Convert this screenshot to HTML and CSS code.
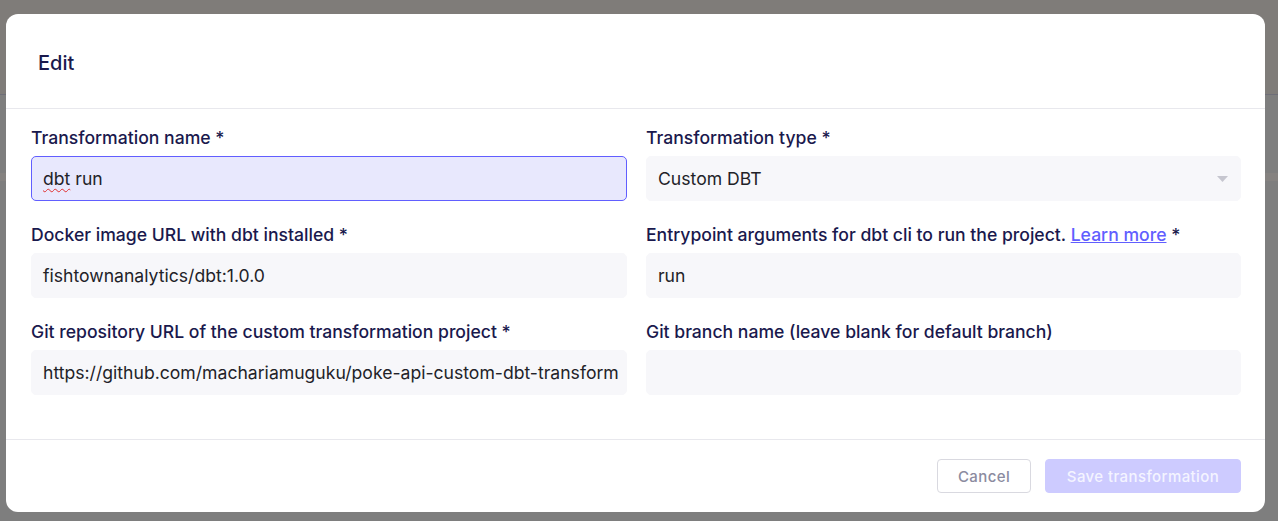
FILE: index.html
```html
<!DOCTYPE html>
<html lang="en">
<head>
<meta charset="utf-8">
<title>Edit</title>
<link rel="stylesheet" href="styles.css">
</head>
<body>
<div class="backdrop">
  <div class="page-bg">
    <div class="bg-top"></div>
    <div class="bg-band"></div>
  </div>
  <div class="modal">
    <div class="modal-header">Edit</div>
    <div class="modal-body">
      <div class="field">
        <label class="label">Transformation name *</label>
        <div class="input focused"><span class="misspelled">dbt</span>&nbsp;run</div>
      </div>
      <div class="field">
        <label class="label">Transformation type *</label>
        <div class="input select">
          <span>Custom DBT</span>
          <svg class="caret" width="11" height="6" viewBox="0 0 11 6"><path d="M0 0 H11 L5.5 6 Z" fill="#c6c6cf"/></svg>
        </div>
      </div>
      <div class="field">
        <label class="label">Docker image URL with dbt installed *</label>
        <div class="input">fishtownanalytics/dbt:1.0.0</div>
      </div>
      <div class="field">
        <label class="label">Entrypoint arguments for dbt cli to run the project. <a class="link" href="#">Learn more</a> *</label>
        <div class="input">run</div>
      </div>
      <div class="field">
        <label class="label">Git repository URL of the custom transformation project *</label>
        <div class="input">https://github.com/machariamuguku/poke-api-custom-dbt-transform</div>
      </div>
      <div class="field">
        <label class="label">Git branch name (leave blank for default branch)</label>
        <div class="input"></div>
      </div>
    </div>
    <div class="modal-footer">
      <button class="btn btn-secondary">Cancel</button>
      <button class="btn btn-primary" disabled>Save transformation</button>
    </div>
  </div>
</div>
</body>
</html>
```
FILE: styles.css
```css
* { box-sizing: border-box; }
html, body { margin: 0; padding: 0; }
body {
  font-family: Inter, "Noto Sans", sans-serif;
  background: #7e7e7e;
  width: 1278px;
  height: 521px;
  overflow: hidden;
}
.backdrop {
  position: relative;
  width: 1278px;
  height: 521px;
  padding: 14px 13px 0 6px;
}
.page-bg {
  position: absolute;
  inset: 0;
  z-index: 0;
}
.bg-top {
  height: 95px;
  background: #7f7c79;
  border-bottom: 1px solid #6e6e78;
}
.bg-band {
  margin-top: 78px;
  height: 8px;
  background: #858280;
}
.modal {
  position: relative;
  z-index: 1;
  width: 1259px;
  height: 498px;
  background: #ffffff;
  border-radius: 12px;
  display: flex;
  flex-direction: column;
}
.modal-header {
  height: 95px;
  padding: 4px 0 0 32px;
  display: flex;
  align-items: center;
  font-size: 20px;
  font-weight: 500;
  color: #1a194d;
  border-bottom: 1px solid #e8e8ed;
}
.modal-body {
  padding: 18px 24px 0 25px;
  display: grid;
  grid-template-columns: 596px 595px;
  column-gap: 19px;
  row-gap: 23px;
  height: 331px;
  border-bottom: 1px solid #e8e8ed;
  align-content: start;
}
.field {
  display: flex;
  flex-direction: column;
}
.label {
  font-size: 17.6px;
  font-weight: 500;
  line-height: 22px;
  color: #1a194d;
  margin-bottom: 7px;
  white-space: nowrap;
}
.link {
  color: #615eff;
  text-decoration: underline;
}
.input {
  height: 45px;
  border-radius: 5px;
  background: #f7f7fa;
  border: 1px solid #f7f7fa;
  padding: 0 12px 0 11px;
  display: flex;
  align-items: center;
  font-size: 17.6px;
  color: #222228;
  white-space: nowrap;
  overflow: hidden;
}
.input.focused {
  background: #e8e8fd;
  border-color: #615eff;
}
.misspelled {
  text-decoration: underline wavy #e03030;
  text-decoration-thickness: 1px;
  text-underline-offset: 3px;
}
.select {
  justify-content: space-between;
  padding-right: 12px;
}
.caret { display: block; }
.modal-footer {
  flex: 1;
  display: flex;
  justify-content: flex-end;
  align-items: flex-start;
  padding: 19px 24px 0 0;
  gap: 14px;
}
.btn {
  font-family: Inter, "Noto Sans", sans-serif;
  height: 34px;
  border-radius: 4px;
  font-size: 15px;
  font-weight: 500;
  letter-spacing: 0.4px;
  cursor: pointer;
}
.btn-secondary {
  width: 94px;
  background: #ffffff;
  border: 1px solid #d9d9e0;
  color: #8b8ba0;
}
.btn-primary {
  width: 196px;
  background: #cdcbff;
  border: 1px solid #cdcbff;
  color: #f4f4ff;
}
```
